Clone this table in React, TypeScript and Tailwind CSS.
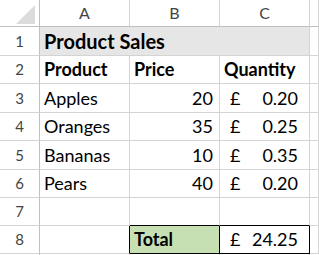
import type { ReactNode } from "react";

const rowHeights = [
  "h-[29px]",
  "h-[28px]",
  "h-[29px]",
  "h-[28px]",
  "h-[29px]",
  "h-[28px]",
  "h-[28px]",
  "h-[28px]",
];

const products = [
  { name: "Apples", price: 20, qty: "0.20" },
  { name: "Oranges", price: 35, qty: "0.25" },
  { name: "Bananas", price: 10, qty: "0.35" },
  { name: "Pears", price: 40, qty: "0.20" },
];

function RowNum({ n, h }: { n: number; h: string }) {
  return (
    <div
      className={`${h} flex items-center justify-center border-r border-b border-r-[#bfbfbf] border-b-[#d4d4d4] text-[15px] text-[#444]`}
    >
      {n}
    </div>
  );
}

function Cell({
  h,
  children,
  className = "",
}: {
  h: string;
  children?: ReactNode;
  className?: string;
}) {
  return (
    <div
      className={`${h} flex items-end border-r border-b border-[#d4d4d4] px-[4px] pb-[3px] leading-[22px] ${className}`}
    >
      {children}
    </div>
  );
}

function Money({ value }: { value: string }) {
  return (
    <div className="flex w-full justify-between pl-[6px] pr-[7px]">
      <span>£</span>
      <span>{value}</span>
    </div>
  );
}

export default function App() {
  return (
    <div className="h-[255px] w-[319px] overflow-hidden bg-white font-['Lato',sans-serif] text-[18px] text-black">
      <div className="grid grid-cols-[40px_90px_90px_90px_1fr]">
        {/* column headers */}
        <div className="relative h-[27px] border-r border-b border-[#bfbfbf]">
          <svg className="absolute top-[5px] left-[16px]" width="20" height="20" viewBox="0 0 20 20">
            <polygon points="19,0 19,19 0,19" fill="#dcdcdc" />
          </svg>
        </div>
        {["A", "B", "C", ""].map((c, i) => (
          <div
            key={i}
            className="flex h-[27px] items-center justify-center border-r border-b border-r-[#d4d4d4] border-b-[#bfbfbf] text-[16px] text-[#444]"
          >
            {c}
          </div>
        ))}

        {/* row 1 */}
        <RowNum n={1} h={rowHeights[0]} />
        <Cell h={rowHeights[0]} className="col-span-3 bg-[#e7e6e6] text-[20px] font-bold">
          Product Sales
        </Cell>
        <Cell h={rowHeights[0]} />

        {/* row 2 */}
        <RowNum n={2} h={rowHeights[1]} />
        <Cell h={rowHeights[1]} className="font-bold">Product</Cell>
        <Cell h={rowHeights[1]} className="font-bold">Price</Cell>
        <Cell h={rowHeights[1]} className="font-bold">Quantity</Cell>
        <Cell h={rowHeights[1]} />

        {products.map((p, i) => {
          const h = rowHeights[i + 2];
          return [
            <RowNum key={`n${i}`} n={i + 3} h={h} />,
            <Cell key={`a${i}`} h={h}>{p.name}</Cell>,
            <Cell key={`b${i}`} h={h} className="justify-end pr-[6px]">
              {p.price}
            </Cell>,
            <Cell key={`c${i}`} h={h} className="px-0">
              <Money value={p.qty} />
            </Cell>,
            <Cell key={`d${i}`} h={h} />,
          ];
        })}

        {/* row 7 */}
        <RowNum n={7} h={rowHeights[6]} />
        <Cell h={rowHeights[6]} />
        <Cell h={rowHeights[6]} className="border-b-black" />
        <Cell h={rowHeights[6]} className="border-b-black" />
        <Cell h={rowHeights[6]} />

        {/* row 8 */}
        <RowNum n={8} h={rowHeights[7]} />
        <Cell h={rowHeights[7]} className="border-r-black" />
        <Cell h={rowHeights[7]} className="border-r-black border-b-black bg-[#c6e0b4] font-bold">
          Total
        </Cell>
        <Cell h={rowHeights[7]} className="border-r-black border-b-black px-0">
          <Money value="24.25" />
        </Cell>
        <Cell h={rowHeights[7]} />

        {/* row 9 */}
        <div className="h-[28px] border-r border-r-[#bfbfbf]" />
        <div className="h-[28px] border-r border-[#d4d4d4]" />
        <div className="h-[28px] border-r border-[#d4d4d4]" />
        <div className="h-[28px] border-r border-[#d4d4d4]" />
        <div className="h-[28px]" />
      </div>
    </div>
  );
}
